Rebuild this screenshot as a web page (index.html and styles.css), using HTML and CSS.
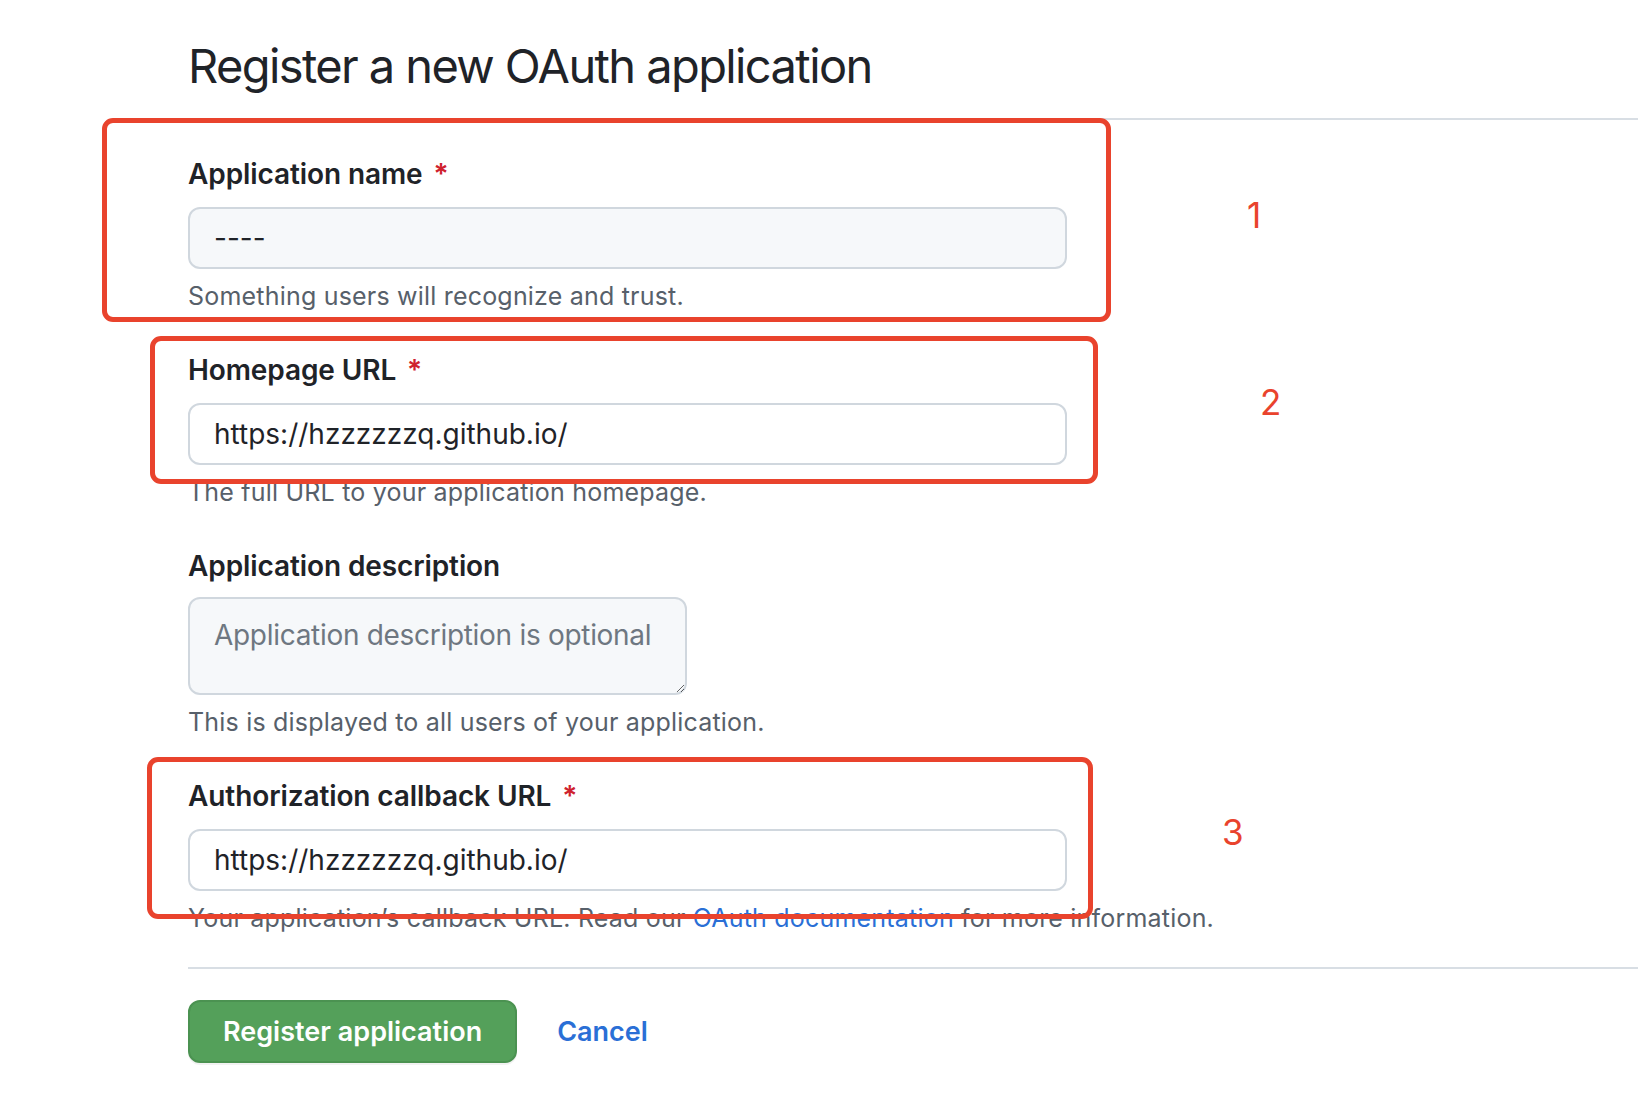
FILE: index.html
```html
<!DOCTYPE html>
<html lang="en">
<head>
<meta charset="utf-8">
<title>Register a new OAuth application</title>
<link rel="stylesheet" href="styles.css">
</head>
<body>
<div class="page">
  <div class="subhead">
    <h1 class="subhead-heading">Register a new OAuth application</h1>
  </div>
  <form class="form">
    <div class="field">
      <label class="field-label">Application name <span class="req">*</span></label>
      <input class="control control-muted" type="text" value="----">
      <p class="note">Something users will recognize and trust.</p>
    </div>
    <div class="field">
      <label class="field-label">Homepage URL <span class="req">*</span></label>
      <input class="control" type="text" value="https://hzzzzzzq.github.io/">
      <p class="note">The full URL to your application homepage.</p>
    </div>
    <div class="field">
      <label class="field-label">Application description</label>
      <textarea class="control control-muted textarea" placeholder="Application description is optional"></textarea>
      <p class="note">This is displayed to all users of your application.</p>
    </div>
    <div class="field">
      <label class="field-label">Authorization callback URL <span class="req">*</span></label>
      <input class="control" type="text" value="https://hzzzzzzq.github.io/">
      <p class="note">Your application’s callback URL. Read our <a class="link" href="#">OAuth documentation</a> for more information.</p>
    </div>
    <div class="actions">
      <button class="btn-primary" type="button">Register application</button>
      <a class="cancel" href="#">Cancel</a>
    </div>
  </form>

  <div class="mark mark-1"></div>
  <div class="mark mark-2"></div>
  <div class="mark mark-3"></div>
  <span class="num num-1">1</span>
  <span class="num num-2">2</span>
  <span class="num num-3">3</span>
</div>
</body>
</html>
```
FILE: styles.css
```css
* { box-sizing: border-box; }

html, body {
  margin: 0;
  padding: 0;
  background: #ffffff;
}

body {
  font-family: Inter, "Noto Sans", "Liberation Sans", sans-serif;
  color: #1f2328;
}

.page {
  position: relative;
  width: 1638px;
  min-height: 1112px;
  padding-left: 188px;
  padding-top: 36px;
}

.subhead {
  border-bottom: 2px solid #d8dee4;
  padding-bottom: 22px;
}

.subhead-heading {
  margin: 0;
  font-size: 47px;
  line-height: 60px;
  font-weight: 400;
  letter-spacing: -1.6px;
  color: #1f2328;
}

.form {
  padding-top: 34px;
}

.field {
  margin-bottom: 36px;
  width: 879px;
}

.field-label {
  display: block;
  font-size: 28px;
  line-height: 40px;
  font-weight: 600;
  letter-spacing: -0.1px;
  color: #1f2328;
  margin-bottom: 13px;
}

.req {
  color: #cf222e;
  margin-left: 4px;
}

.control {
  display: block;
  width: 879px;
  height: 62px;
  padding: 0 24px;
  font-family: Inter, "Noto Sans", "Liberation Sans", sans-serif;
  font-size: 28px;
  color: #1f2328;
  background: #ffffff;
  border: 2px solid #d0d7de;
  border-radius: 12px;
  outline: none;
}

.control-muted {
  background: #f6f8fa;
}

.textarea {
  width: 499px;
  height: 98px;
  margin-top: -2px;
  padding: 15px 10px 15px 24px;
  line-height: 42px;
  letter-spacing: -0.3px;
  resize: vertical;
}

.textarea::placeholder {
  color: #6e7781;
}

.note {
  margin: 9px 0 0;
  font-size: 25px;
  line-height: 36px;
  letter-spacing: 0.2px;
  color: #57606a;
  white-space: nowrap;
}

.link {
  color: #2a6fd6;
  text-decoration: none;
}

.actions {
  border-top: 2px solid #d8dee4;
  margin-top: -5px;
  padding-top: 31px;
  display: flex;
  align-items: center;
  gap: 40px;
}

.btn-primary {
  height: 63px;
  padding: 0 33px;
  font-family: Inter, "Noto Sans", "Liberation Sans", sans-serif;
  font-size: 27px;
  font-weight: 600;
  color: #ffffff;
  background: #54a05a;
  border: 2px solid #4b9251;
  border-radius: 12px;
  box-shadow: 0 2px 0 rgba(31, 35, 40, 0.06);
}

.cancel {
  font-size: 27px;
  font-weight: 600;
  color: #2a6fd6;
  text-decoration: none;
}

/* annotation overlays */
.mark {
  position: absolute;
  border: 5px solid #e9432d;
  border-radius: 11px;
  pointer-events: none;
}

.mark-1 { left: 102px; top: 118px; width: 1009px; height: 204px; }
.mark-2 { left: 150px; top: 336px; width: 948px; height: 148px; }
.mark-3 { left: 147px; top: 757px; width: 946px; height: 162px; }

.num {
  position: absolute;
  font-family: Inter, "Liberation Sans", sans-serif;
  font-size: 35px;
  line-height: 1;
  font-weight: 400;
  color: #e9432d;
}

.num-1 { left: 1247px; top: 198px; }
.num-2 { left: 1260px; top: 385px; }
.num-3 { left: 1222px; top: 815px; }
```
